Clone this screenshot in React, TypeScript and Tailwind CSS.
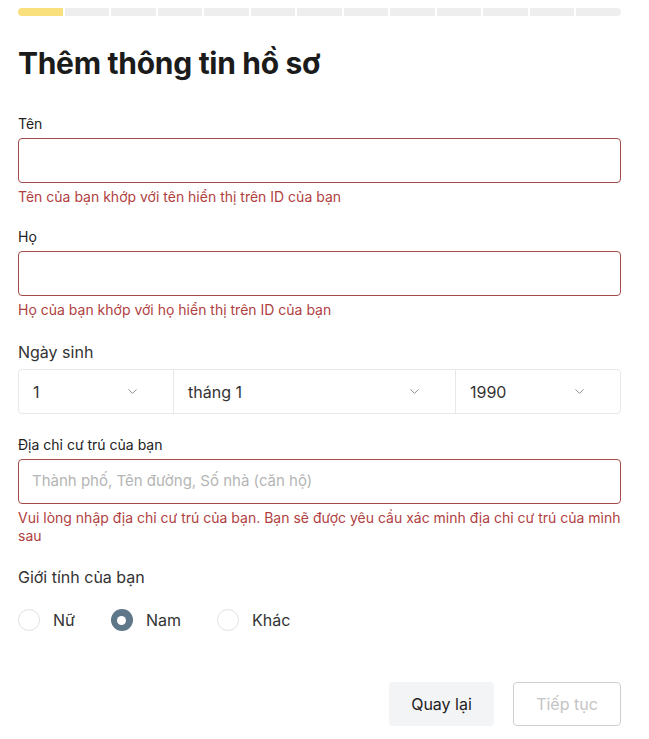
import { ChevronDown } from 'lucide-react'

const Field = ({ label, hint, placeholder }: { label: string; hint: string; placeholder?: string }) => {
  return (
    <div className="flex flex-col">
      <label className="text-[14px] leading-[20px] text-[#222] mb-[4px]">{label}</label>
      <div className="h-[45px] border border-[#a34b4b] rounded-[4px] flex items-center px-[13px]">
        {placeholder && <span className="text-[15px] text-[#b5b5b5]">{placeholder}</span>}
      </div>
      <p className="text-[14px] leading-[18px] text-[#b04141] mt-[5px]">{hint}</p>
    </div>
  )
}

const Select = ({ value, className }: { value: string; className: string }) => {
  return (
    <div className={`flex items-center justify-between pl-[14px] pr-[33px] ${className}`}>
      <span className="text-[16px] text-[#333]">{value}</span>
      <ChevronDown className="h-[15px] w-[15px] text-[#888]" strokeWidth={1.5} />
    </div>
  )
}

const Radio = ({ label, checked }: { label: string; checked?: boolean }) => {
  return (
    <div className="flex items-center gap-[13px]">
      {checked ? (
        <div className="h-[22px] w-[22px] rounded-full bg-[#5f7889] flex items-center justify-center">
          <div className="h-[9px] w-[9px] rounded-full bg-white" />
        </div>
      ) : (
        <div className="h-[22px] w-[22px] rounded-full border border-[#e2e2e2]" />
      )}
      <span className="text-[16px] text-[#333]">{label}</span>
    </div>
  )
}

const App = () => {
  const steps = Array.from({ length: 13 })
  return (
    <div className="w-[649px] h-[739px] bg-white px-[18px] pt-[8px] font-['Inter','Roboto',sans-serif] overflow-hidden">
      <div className="flex w-[603px] h-[8px] gap-[2px] rounded-full overflow-hidden">
        {steps.map((_, i) => (
          <div key={i} className={i === 0 ? 'flex-1 bg-[#f9e07d]' : 'flex-1 bg-[#eeeeee]'} />
        ))}
      </div>

      <h1 className="mt-[27px] text-[30px] leading-[40px] font-bold text-[#1b1b1b] tracking-[-0.3px]">Thêm thông tin hồ sơ</h1>

      <div className="w-[603px] mt-[31px] flex flex-col">
        <Field label="Tên" hint="Tên của bạn khớp với tên hiển thị trên ID của bạn" />
        <div className="mt-[21px]">
          <Field label="Họ" hint="Họ của bạn khớp với họ hiển thị trên ID của bạn" />
        </div>

        <div className="mt-[22px]">
          <p className="text-[16px] leading-[22px] text-[#333] mb-[6px]">Ngày sinh</p>
          <div className="flex h-[45px] border border-[#e8e8e8] rounded-[4px]">
            <Select value="1" className="w-[155px] border-r border-[#e8e8e8]" />
            <Select value="tháng 1" className="w-[282px] border-r border-[#e8e8e8]" />
            <Select value="1990" className="flex-1" />
          </div>
        </div>

        <div className="mt-[21px]">
          <Field
            label="Địa chỉ cư trú của bạn"
            placeholder="Thành phố, Tên đường, Số nhà (căn hộ)"
            hint="Vui lòng nhập địa chỉ cư trú của bạn. Bạn sẽ được yêu cầu xác minh địa chỉ cư trú của mình sau"
          />
        </div>

        <div className="mt-[21px]">
          <p className="text-[16px] leading-[22px] text-[#333]">Giới tính của bạn</p>
          <div className="flex items-center gap-[36px] mt-[20px]">
            <Radio label="Nữ" />
            <Radio label="Nam" checked />
            <Radio label="Khác" />
          </div>
        </div>

        <div className="flex justify-end gap-[19px] mt-[50px]">
          <button className="h-[44px] w-[105px] rounded-[4px] bg-[#f3f4f6] text-[16px] text-[#222]">Quay lại</button>
          <button className="h-[44px] w-[108px] rounded-[4px] border border-[#cfcfcf] text-[16px] text-[#c4c4c4]">Tiếp tục</button>
        </div>
      </div>
    </div>
  )
}

export default App
